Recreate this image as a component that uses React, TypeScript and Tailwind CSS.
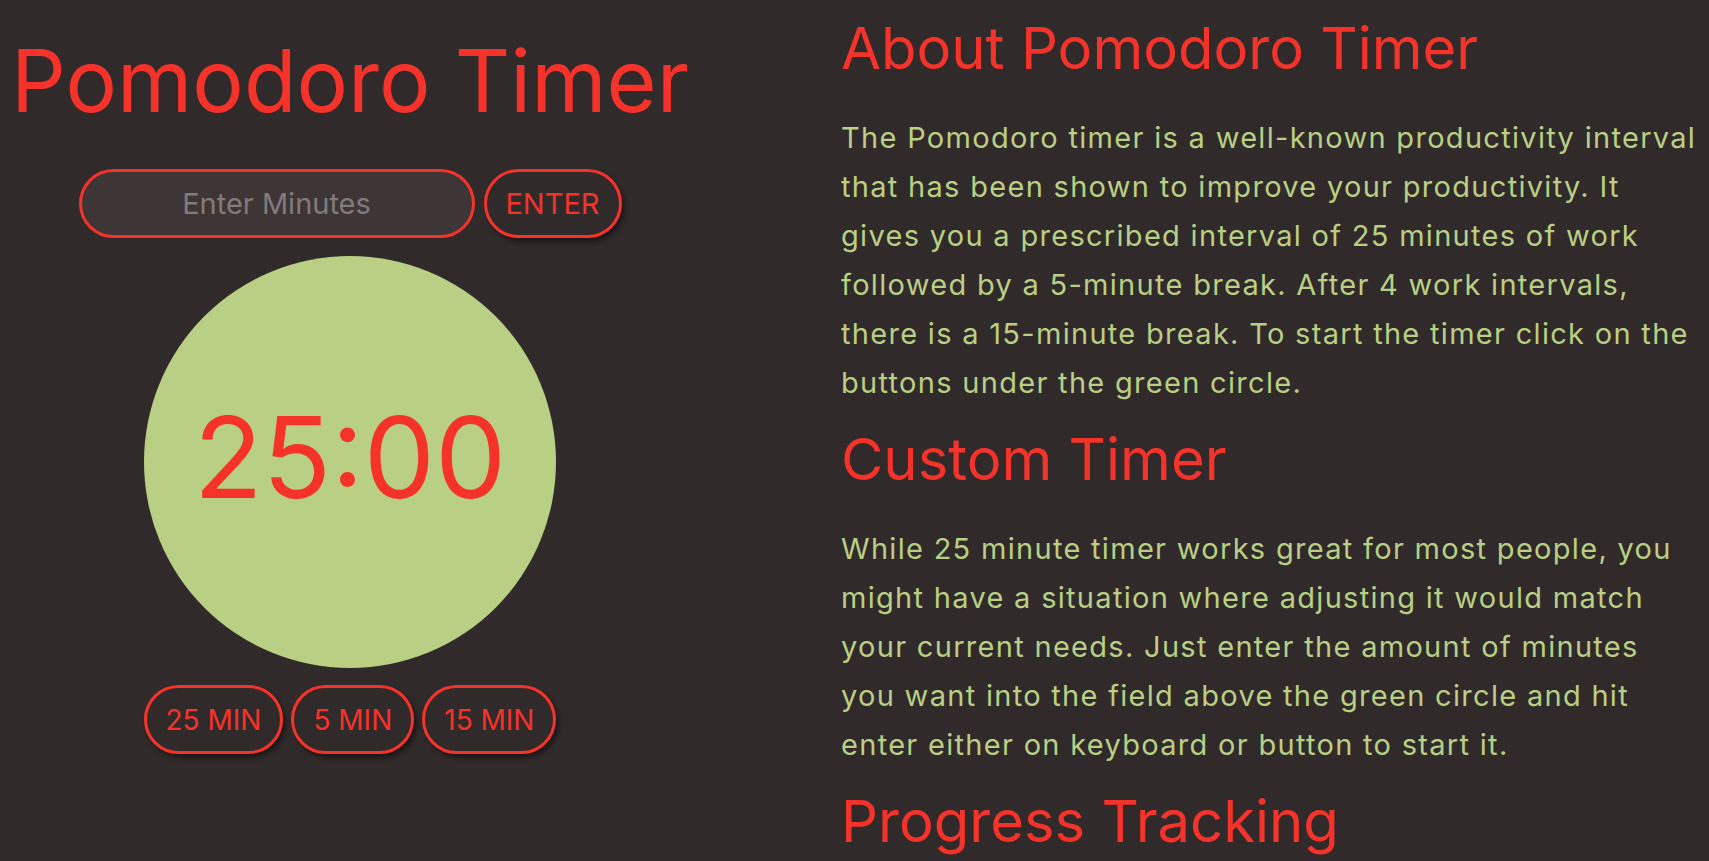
import { useState } from "react";

const FONT = "font-['Inter','Noto_Sans',sans-serif]";

const aboutLines = [
  "The Pomodoro timer is a well-known productivity interval",
  "that has been shown to improve your productivity. It",
  "gives you a prescribed interval of 25 minutes of work",
  "followed by a 5-minute break. After 4 work intervals,",
  "there is a 15-minute break. To start the timer click on the",
  "buttons under the green circle.",
];

const customLines = [
  "While 25 minute timer works great for most people, you",
  "might have a situation where adjusting it would match",
  "your current needs. Just enter the amount of minutes",
  "you want into the field above the green circle and hit",
  "enter either on keyboard or button to start it.",
];

const Paragraph = ({ lines }: { lines: string[] }) => (
  <p className="text-[29px] leading-[49px] tracking-[1.3px] text-[#b9cf84] mb-[17px] whitespace-nowrap">
    {lines.map((line, i) => (
      <span key={i} className="block">
        {line}
      </span>
    ))}
  </p>
);

const About = () => {
  return (
    <div className="pt-[13px] overflow-hidden">
      <h2 className="text-[58px] leading-[70px] text-[#f5332a] mb-[30px]">
        About Pomodoro Timer
      </h2>
      <Paragraph lines={aboutLines} />

      <h2 className="text-[58px] leading-[70px] text-[#f5332a] mb-[30px]">
        Custom Timer
      </h2>
      <Paragraph lines={customLines} />

      <h2 className="text-[58px] leading-[70px] text-[#f5332a]">
        Progress Tracking
      </h2>
    </div>
  );
};

const Timer = () => {
  const [minutes, setMinutes] = useState(25);
  const [value, setValue] = useState("");

  const presets = [25, 5, 15];

  return (
    <div className="flex flex-col items-center">
      <h1 className="mt-[30px] text-[86px] leading-[103px] text-[#f5332a]">
        Pomodoro Timer
      </h1>

      <div className="mt-[36px] flex items-center gap-[9px]">
        <input
          value={value}
          onChange={(e) => setValue(e.target.value)}
          placeholder="Enter Minutes"
          className="w-[396px] h-[69px] rounded-full border-[3px] border-[#f5332a] bg-[#3d3536] text-center text-[29px] text-[#b9cf84] placeholder:text-[#827b7b] outline-none"
        />
        <button
          onClick={() => value && setMinutes(Number(value))}
          className="h-[69px] w-[138px] rounded-full border-[3px] border-[#f5332a] text-[29px] text-[#f5332a] shadow-[3px_4px_5px_rgba(0,0,0,0.45)]"
        >
          ENTER
        </button>
      </div>

      <div className="mt-[18px] w-[412px] h-[412px] rounded-full bg-[#b9cf84] flex items-center justify-center">
        <span className="text-[113px] leading-none text-[#f5332a] pb-[10px]">
          {String(minutes).padStart(2, "0")}:00
        </span>
      </div>

      <div className="mt-[17px] flex gap-[8px]">
        {presets.map((m) => (
          <button
            key={m}
            onClick={() => setMinutes(m)}
            className="h-[69px] px-[19px] rounded-full border-[3px] border-[#f5332a] text-[28px] text-[#f5332a] shadow-[3px_4px_5px_rgba(0,0,0,0.45)]"
          >
            {m} MIN
          </button>
        ))}
      </div>
    </div>
  );
};

export default function App() {
  return (
    <div className={`min-h-screen bg-[#312a2b] ${FONT}`}>
      <div className="grid grid-cols-[700px_1fr] gap-x-[141px]">
        <Timer />
        <About />
      </div>
    </div>
  );
}
